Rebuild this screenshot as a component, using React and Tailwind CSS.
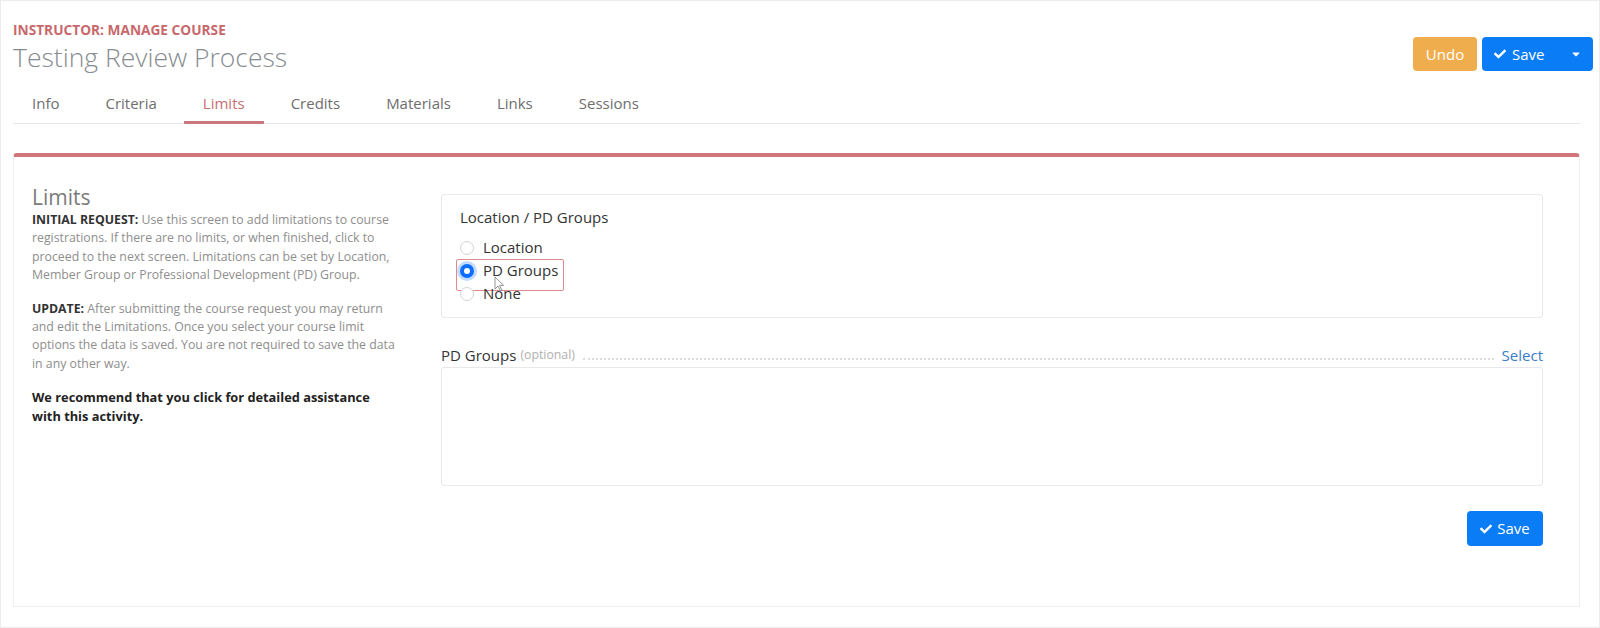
import { FaCheck, FaCaretDown } from "react-icons/fa";

const tabs = ["Info", "Criteria", "Limits", "Credits", "Materials", "Links", "Sessions"];
const limitOptions = ["Location", "PD Groups", "None"];

function Radio({ checked }) {
  if (checked) {
    return (
      <span className="w-[14px] h-[14px] rounded-full bg-[#0d6efd] flex items-center justify-center shadow-[0_0_0_3px_rgba(13,110,253,0.25)]">
        <span className="w-[6px] h-[6px] rounded-full bg-white" />
      </span>
    );
  }
  return <span className="w-[14px] h-[14px] rounded-full border border-[#d4d4d4] bg-white" />;
}

function Pointer() {
  return (
    <svg width="11" height="16" viewBox="0 0 11 16" className="absolute left-[34px] top-[17px]">
      <path d="M1 1 L1 13 L4 10 L6.5 15 L8 14.3 L5.6 9.4 L9.6 9.4 Z" fill="#fff" stroke="#8a8a8a" strokeWidth="0.9" strokeLinejoin="round" />
    </svg>
  );
}

export default function App() {
  return (
    <div className="w-[1600px] h-[628px] bg-white border border-[#ececec] overflow-hidden font-['Open_Sans',sans-serif]">
      {/* page header */}
      <div className="flex items-start justify-between pl-[12px] pr-[6px] pt-[20px]">
        <div>
          <div className="text-[13.7px] leading-[18px] font-bold text-[#c8686c]">INSTRUCTOR: MANAGE COURSE</div>
          <h1 className="text-[26.5px] leading-[36px] font-light text-[#878c91]">Testing Review Process</h1>
        </div>
        <div className="flex gap-[5px] mt-[16px]">
          <button className="h-[34px] w-[64px] rounded-[4px] bg-[#f0ad4e] text-white text-[15px]">Undo</button>
          <button className="h-[34px] w-[111px] rounded-[4px] bg-[#0a7cf6] text-white text-[15px] flex items-center pl-[12px] pr-[11px]">
            <FaCheck className="w-[12px] h-[12px] mr-[6px]" />
            Save
            <FaCaretDown className="ml-auto w-[12px] h-[12px]" />
          </button>
        </div>
      </div>

      {/* tabs */}
      <div className="ml-[12px] mr-[19px] mt-[8px] flex gap-2 border-b border-[#e6e6e6]">
        {tabs.map((t) => (
          <div
            key={t}
            className={`px-[19px] pt-[9px] pb-[7px] -mb-px text-[15px] leading-[22px] border-b-[3px] rounded-b-[1px] ${
              t === "Limits" ? "text-[#c56f74] border-[#c9777b]" : "text-[#6e6e6e] border-transparent"
            }`}
          >
            {t}
          </div>
        ))}
      </div>

      {/* limits card */}
      <div className="ml-[12px] mr-[19px] mt-[29px] h-[454px] rounded-t-[4px] border-t-4 border-[#d07579] border-x border-b border-x-[#f0f0f0] border-b-[#f0f0f0] flex pl-[18px] pr-[36px]">
        <div className="w-[365px] pt-[27px] text-[12.3px] leading-[18.4px] text-[#8e8e8e]">
          <h2 className="text-[21px] leading-[27px] text-[#7b7b7b]">Limits</h2>
          <p className="mb-[15px]">
            <b className="text-[#333]">INITIAL REQUEST:</b> Use this screen to add limitations to course registrations. If
            there are no limits, or when finished, click to proceed to the next screen. Limitations can be set by
            Location, Member Group or Professional Development (PD) Group.
          </p>
          <p className="mb-[15px]">
            <b className="text-[#333]">UPDATE:</b> After submitting the course request you may return and edit the
            Limitations. Once you select your course limit options the data is saved. You are not required to save
            the data in any other way.
          </p>
          <p className="text-[12.8px] font-bold text-[#222]">
            We recommend that you click for detailed assistance with this activity.
          </p>
        </div>

        <div className="ml-auto w-[1102px] pt-[37px] flex flex-col">
          <div className="border border-[#e8e8e8] rounded-[3px] pl-[18px] pt-[12px] pb-[12px] text-[15px] text-[#333]">
            <div className="leading-[20px] mb-[9px]">Location / PD Groups</div>
            {limitOptions.map((o) => (
              <div key={o} className="relative flex items-center gap-[9px] h-[23px] leading-[23px]">
                <Radio checked={o === "PD Groups"} />
                <span>{o}</span>
                {o === "PD Groups" && (
                  <>
                    <span className="absolute -left-[4px] top-0 w-[108px] h-[32px] border border-[#e0898d] rounded-[2px]" />
                    <Pointer />
                  </>
                )}
              </div>
            ))}
          </div>

          <div className="mt-[27px] flex items-end text-[15px] leading-[20px]">
            <span className="text-[#333]">PD Groups</span>
            <span className="ml-[4px] text-[12.3px] text-[#b0b0b0]">(optional)</span>
            <span className="flex-1 mx-[8px] mb-[5px] border-b-2 border-dotted border-[#dcdcdc]" />
            <span className="text-[#3b7cc6]">Select</span>
          </div>
          <div className="mt-[2px] h-[119px] border border-[#e8e8e8] rounded-[3px]" />

          <button className="mt-[25px] self-end h-[35px] w-[76px] rounded-[4px] bg-[#0a7cf6] text-white text-[15px] flex items-center justify-center">
            <FaCheck className="w-[12px] h-[12px] mr-[5px]" />
            Save
          </button>
        </div>
      </div>
    </div>
  );
}
